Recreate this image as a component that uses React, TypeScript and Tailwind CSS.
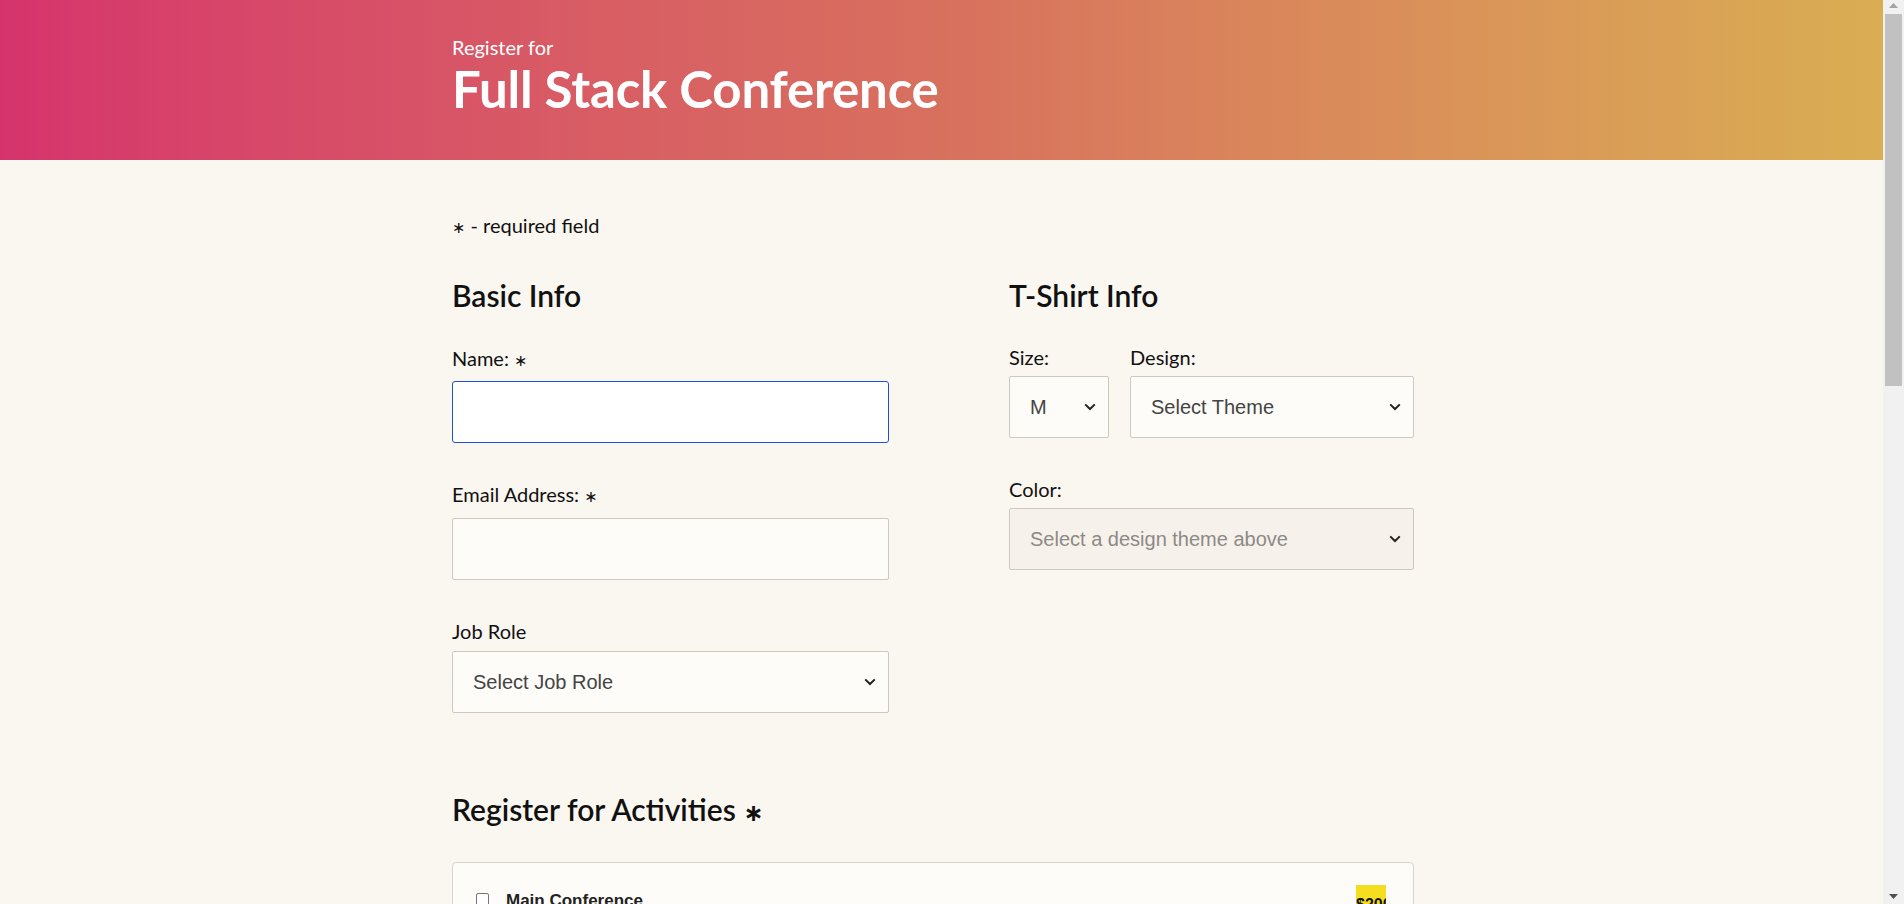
import React from "react";

const Chevron = () => (
  <svg width="12" height="8" viewBox="0 0 12 8" className="text-[#222]">
    <path d="M1.2 1.4 L6 6 L10.8 1.4" stroke="currentColor" strokeWidth="2" fill="none" />
  </svg>
);

function SelectBox({
  text,
  className,
  disabled,
}: {
  text: string;
  className: string;
  disabled?: boolean;
}) {
  return (
    <div
      className={
        "flex items-center justify-between h-[62px] rounded-[2px] border border-[#cdc8c2] pl-[20px] pr-[12px] font-['Liberation_Sans',Arial,sans-serif] text-[20px] " +
        (disabled ? "bg-[#f7f1eb] text-[#8c8a87] " : "bg-[#fdfcf9] text-[#444] ") +
        className
      }
    >
      <span>{text}</span>
      <Chevron />
    </div>
  );
}

const Star = () => <span className="font-['DejaVu_Sans',sans-serif] text-[0.8em]">∗</span>;

export default function App() {
  const activities = [
    { name: "Main Conference", price: "$200" },
    { name: "JavaScript Frameworks Workshop", price: "$100" },
    { name: "JavaScript Libraries Workshop", price: "$100" },
    { name: "Node.js Workshop", price: "$100" },
    { name: "Build tools Workshop", price: "$100" },
    { name: "npm Workshop", price: "$100" },
  ];
  return (
    <div className="flex h-screen overflow-hidden bg-[#faf6f0] font-['Lato',sans-serif] text-[#111]">
      <div className="flex-1 overflow-hidden">
        <header className="h-[160px] bg-linear-to-r from-[#d6336c] via-[#d8705e] to-[#d9ae52]">
          <div className="w-[979px] mx-auto pt-[35px] text-white">
            <p className="text-[20px] leading-[1.2]">Register for</p>
            <h1 className="text-[51px] leading-[1.2] font-bold tracking-[-0.2px] mt-[-1px]">Full Stack Conference</h1>
          </div>
        </header>

        <main className="w-[979px] mx-auto">
          <p className="mt-[53px] text-[20px] leading-[1.2]">
            <Star /> - required field
          </p>

          <div className="mt-[40px] flex gap-[120px] items-start">
            <section className="w-[437px]">
              <h2 className="text-[30px] leading-[1.2] font-semibold">Basic Info</h2>
              <label className="block mt-[33px] text-[20px] leading-[1.2]">
                Name: <Star />
              </label>
              <div className="mt-[11px] h-[62px] rounded-[3px] border border-[#1d4fe0] bg-white"></div>
              <label className="block mt-[39px] text-[20px] leading-[1.2]">
                Email Address: <Star />
              </label>
              <div className="mt-[11px] h-[62px] rounded-[2px] border border-[#cdc8c2] bg-[#fdfcf9]"></div>
              <label className="block mt-[39px] text-[20px] leading-[1.2]">Job Role</label>
              <SelectBox text="Select Job Role" className="mt-[8px]" />
            </section>

            <section className="w-[405px]">
              <h2 className="text-[30px] leading-[1.2] font-semibold">T-Shirt Info</h2>
              <div className="mt-[32px] flex gap-[21px]">
                <div className="w-[100px]">
                  <label className="block text-[20px] leading-[1.2]">Size:</label>
                  <SelectBox text="M" className="mt-[7px]" />
                </div>
                <div className="flex-1">
                  <label className="block text-[20px] leading-[1.2]">Design:</label>
                  <SelectBox text="Select Theme" className="mt-[7px]" />
                </div>
              </div>
              <label className="block mt-[39px] text-[20px] leading-[1.2]">Color:</label>
              <SelectBox text="Select a design theme above" className="mt-[7px]" disabled />
            </section>
          </div>

          <h2 className="mt-[78px] text-[30px] leading-[1.2] font-semibold">
            Register for Activities <Star />
          </h2>

          <div className="mt-[35px] w-[962px] rounded-[4px] border border-[#d8d3cd] bg-[#fdfcf9] px-[23px] pt-[22px] pb-[10px]">
            {activities.map((a) => (
              <div key={a.name} className="flex items-start justify-between mb-[16px]">
                <div className="flex items-start gap-[17px] pt-[7px]">
                  <span className="mt-[1px] w-[13px] h-[13px] rounded-[2px] border border-[#767676] bg-white"></span>
                  <span className="font-['Liberation_Sans',Arial,sans-serif] font-bold text-[17px] leading-none text-[#222]">
                    {a.name}
                  </span>
                </div>
                <span className="w-[30px] h-[44px] bg-[#f5dd1f] pt-[12px] text-center font-['Liberation_Sans',Arial,sans-serif] font-bold text-[16px] leading-none overflow-hidden mr-[4px]">
                  {a.price}
                </span>
              </div>
            ))}
          </div>
        </main>
      </div>

      <div className="w-[21px] bg-[#f1f1f1] flex flex-col items-center">
        <div className="h-[14px] flex items-start justify-center pt-[3px]">
          <svg width="9" height="5" viewBox="0 0 9 5">
            <path d="M0 5 L4.5 0 L9 5 Z" fill="#a3a3a3" />
          </svg>
        </div>
        <div className="w-[17px] h-[372px] bg-[#c1c1c1]"></div>
        <div className="flex-1"></div>
        <div className="h-[14px] flex items-start justify-center pt-[4px]">
          <svg width="9" height="5" viewBox="0 0 9 5">
            <path d="M0 0 L9 0 L4.5 5 Z" fill="#505050" />
          </svg>
        </div>
      </div>
    </div>
  );
}
